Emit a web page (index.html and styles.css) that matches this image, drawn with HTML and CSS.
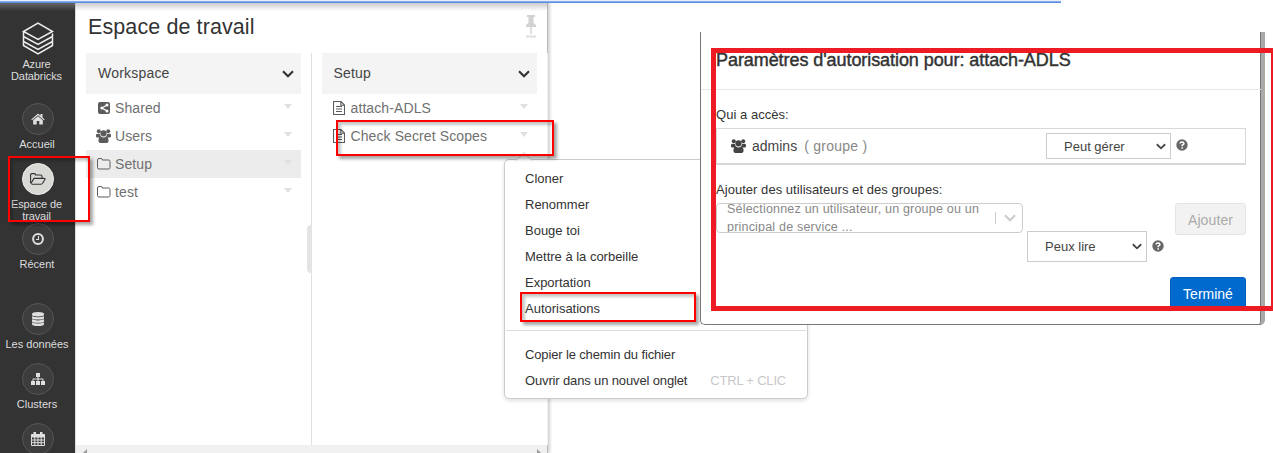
FILE: index.html
```html
<!DOCTYPE html>
<html lang="fr">
<head>
<meta charset="utf-8">
<title>Espace de travail</title>
<link rel="stylesheet" href="styles.css">
</head>
<body>
<svg class="defs" width="0" height="0">
  <symbol id="users" viewBox="0 0 15 14"><g fill="currentColor"><circle cx="2.8" cy="2.3" r="2"/><circle cx="12.2" cy="2.3" r="2"/><circle cx="7.5" cy="4.3" r="3.1"/><path d="M0 7.6V6Q.3 4.6 2 4.8L4 5Q4 6.5 5 7.4L3.5 8.4H1Q0 8.4 0 7.6ZM15 7.6V6Q14.7 4.6 13 4.8L11 5Q11 6.5 10 7.4L11.5 8.4H14Q15 8.4 15 7.6ZM2.4 12Q2.4 7.8 5 7.5Q7.5 9.3 10 7.5Q12.6 7.8 12.6 12Q12.4 14 10.6 14H4.4Q2.6 14 2.4 12Z"/></g></symbol>
  <symbol id="folder" viewBox="0 0 14 12"><path d="M.5 9.5V2Q.5.5 2 .5H4.2Q5.3.5 5.3 2H11.5Q13 2 13 3.5V9.5Q13 11 11.5 11H2Q.5 11 .5 9.5Z" fill="none" stroke="currentColor"/></symbol>
  <symbol id="note" viewBox="0 0 12 14"><path d="M.5.5H8L11.5 4V13.5H.5ZM7.8.5V4.2H11.5M3 5.5H9M3 8H9M3 10.5H9" fill="none" stroke="currentColor" stroke-width="1.1"/></symbol>
  <symbol id="chevron" viewBox="0 0 12 8"><path d="M1 1.3L6 6.2L11 1.3" fill="none" stroke="currentColor" stroke-width="2.2"/></symbol>
  <symbol id="help" viewBox="0 0 12 12"><circle cx="6" cy="6" r="5.7" fill="currentColor"/><path d="M4 4.5Q4.2 3 6 3T8 4.6Q8 5.5 6.2 6.2V7.2M6.2 8.2V9.8" fill="none" stroke="#fff" stroke-width="1.5"/></symbol>
</svg>

<div class="app">
  <nav class="sidebar">
    <div class="brand">
      <svg width="32" height="33" viewBox="0 0 32 33" fill="none" stroke="#eee" stroke-width="1.5"><path d="M1.5 9.5L16 1L30.500 9.5L16 17.500ZM1.500 9.500V14.500L16 22.500L30.500 14.500V11.500M1.500 14.500V19.500L16 27.500L30.500 19.500V15.500M1.500 19.500V23.500L16 32L30.500 23.500V20"/></svg>
      <span>Azure<br>Databricks</span>
    </div>
    <div class="item"><i><svg width="14" height="12" viewBox="0 0 14 12" fill="#e0e0e0"><path d="M.3 6.400L7 .5L9.500 2.700V1H11.500V4.500L13.700 6.400L12.900 7.200L7 2.200L1.100 7.200ZM2.200 7.200L7 3.200L11.800 7.200V11.500H8.300V8H5.700V11.500H2.200Z"/></svg></i><span>Accueil</span></div>
    <div class="item active"><i><svg width="16" height="12" viewBox="0 0 16 12" fill="none" stroke="#333" stroke-width="1.100"><path d="M.6 10V2Q.6.6 2 .6H4.500Q5.500.6 5.500 2H10.500Q12 2 12 3.500V5M.8 10.700L4 5.400H14Q15.600 5.400 15 6.300L12.600 10.300Q12 11.200 11 11.200H1.500"/></svg></i><span>Espace de<br>travail</span></div>
    <div class="item"><i><svg width="12" height="12" viewBox="0 0 12 12" fill="none" stroke="#e0e0e0"><circle cx="6" cy="6" r="4.900" stroke-width="2"/><path d="M6.500 3V6.500H4" stroke-width="1.100"/></svg></i><span>Récent</span></div>
    <div class="item gap"><i><svg width="12" height="14" viewBox="0 0 12 14" fill="#e0e0e0"><path d="M0 2Q0 0 6 0T12 2V3Q12 4.400 6 4.400T0 3ZM0 4.200Q2 5.300 6 5.300T12 4.200V6Q12 7.500 6 7.500T0 6ZM0 7.300Q2 8.400 6 8.400T12 7.300V9.200Q12 10.700 6 10.700T0 9.200ZM0 10.500Q2 11.600 6 11.600T12 10.500V12Q12 14 6 14T0 12Z"/></svg></i><span>Les données</span></div>
    <div class="item"><i><svg width="14" height="12" viewBox="0 0 14 12" fill="#e0e0e0"><path d="M5 0H9V4H7.500V5.500H11.500Q12.500 5.500 12.500 6.500V8H14V12H10V8H11.500V6.500H7.500V8H9V12H5V8H6.500V6.500H2.500V8H4V12H0V8H1.500V6.500Q1.500 5.500 2.500 5.500H6.500V4H5Z"/></svg></i><span>Clusters</span></div>
    <div class="item"><i><svg width="14" height="14" viewBox="0 0 14 14"><path d="M.5 2.500H13.500V13.500H.5ZM.5 5H13.500M.5 8H13.500M.5 10.700H13.500M3.800 5V13.500M7 5V13.500M10.200 5V13.500" fill="none" stroke="#e0e0e0"/><path d="M.5 2H13.500V5H.5ZM2.500 0H5V3.500H2.500ZM9 0H11.500V3.500H9Z" fill="#e0e0e0"/></svg></i></div>
  </nav>

  <main class="panel">
    <header class="panel-head">
      <h1>Espace de travail</h1>
      <svg width="12" height="23" viewBox="0 0 12 23"><path d="M2 0H10V2H8.500V8L11 10V12H1V10L3.500 8V2H2Z" fill="#d2d2d2"/><path d="M6 12V19M1 21.500H11" stroke="#dedede" stroke-width="2"/></svg>
    </header>
    <div class="columns">
      <section class="col">
        <div class="col-head"><span>Workspace</span><svg width="12" height="8"><use href="#chevron"/></svg></div>
        <div class="row"><svg class="ico" width="14" height="13" viewBox="0 0 14 13"><rect x="1" width="12" height="12" rx="2" fill="currentColor"/><path d="M10 3L5 6L10 9" fill="none" stroke="#fff" stroke-width="1.200"/><circle cx="10" cy="3" r="1.500" fill="#fff"/><circle cx="4.800" cy="6" r="1.500" fill="#fff"/><circle cx="10" cy="9" r="1.500" fill="#fff"/></svg><span>Shared</span><b></b></div>
        <div class="row"><svg class="ico" width="15" height="14"><use href="#users"/></svg><span>Users</span><b></b></div>
        <div class="row selected"><svg class="ico" width="14" height="12"><use href="#folder"/></svg><span>Setup</span><b></b></div>
        <div class="row"><svg class="ico" width="14" height="12"><use href="#folder"/></svg><span>test</span><b></b></div>
      </section>
      <div class="divider"><div class="grip"></div></div>
      <section class="col">
        <div class="col-head"><span>Setup</span><svg width="12" height="8"><use href="#chevron"/></svg></div>
        <div class="row note"><svg class="ico" width="12" height="14"><use href="#note"/></svg><span>attach-ADLS</span><b></b></div>
        <div class="row note"><svg class="ico" width="12" height="14"><use href="#note"/></svg><span>Check Secret Scopes</span><b></b></div>
      </section>
      <div class="divider end"></div>
    </div>
    <footer class="scroll"><svg width="4" height="4"><path d="M4 0V4H0Z" fill="#999"/></svg><svg width="4" height="4"><path d="M0 0V4H4Z" fill="#999"/></svg></footer>
  </main>
</div>
<div class="topbar"></div>
<div class="topshade"></div>

<div class="menu">
  <svg class="tip" width="18" height="10" viewBox="0 0 18 10"><path d="M1 9.500L9 1.500L17 9.500" fill="#fff" stroke="#ccc"/></svg>
  <div>Cloner</div><div>Renommer</div><div>Bouge toi</div><div>Mettre à la corbeille</div><div>Exportation</div><div>Autorisations</div>
  <hr>
  <div>Copier le chemin du fichier</div>
  <div class="shortcut"><span>Ouvrir dans un nouvel onglet</span><kbd>CTRL + CLIC</kbd></div>
</div>
<div class="mark mark-nav"></div>
<div class="mark mark-file"></div>
<div class="mark mark-perm"></div>

<div class="dialog">
  <h2><span>Paramètres d'autorisation pour: attach-ADLS</span></h2>
  <div class="body">
    <label>Qui a accès:</label>
    <div class="access">
      <svg class="ico" width="15" height="14"><use href="#users"/></svg>
      <span class="who">admins</span><span class="kind">( groupe )</span>
      <div class="select manage"><span>Peut gérer</span><svg width="10" height="7" viewBox="0 0 12 8"><use href="#chevron"/></svg></div>
      <svg class="help" width="12" height="12"><use href="#help"/></svg>
    </div>
    <label class="add-label">Ajouter des utilisateurs et des groupes:</label>
    <div class="add">
      <div class="combo"><p>Sélectionnez un utilisateur, un groupe ou un principal de service ...</p><em></em><svg width="12" height="8"><use href="#chevron"/></svg></div>
      <div class="select read"><span>Peux lire</span><svg width="10" height="7" viewBox="0 0 12 8"><use href="#chevron"/></svg></div>
      <svg class="help" width="12" height="12"><use href="#help"/></svg>
      <div class="button">Ajouter</div>
    </div>
    <div class="actions"><div class="button primary">Terminé</div></div>
  </div>
</div>
<div class="frame"></div>
</body>
</html>
```
FILE: styles.css
```css
* { box-sizing: border-box; }
body { margin: 0; width: 1273px; height: 453px; overflow: hidden; position: relative; background: #fff; font: 13px/16px "Liberation Sans", Arial, sans-serif; color: #333; }
svg { display: block; flex: none; }
.defs { position: absolute; }
h1, h2, p { margin: 0; font-weight: 400; }

.app { display: flex; height: 453px; }
.topbar { position: absolute; top: 0; left: 0; width: 1061px; height: 3px; background: #e8eefa; border-bottom: 1px solid #608de0; box-shadow: inset 0 -1px #86aaeb; }
.topshade { position: absolute; top: 3px; left: 0; width: 548px; height: 8px; background: linear-gradient(rgba(150,150,150,.5), rgba(150,150,150,0)); }

.sidebar { width: 75px; height: 453px; overflow: hidden; background: #333; color: #ddd; font-size: 11px; line-height: 12px; text-align: center; padding-top: 22px; flex: none; }
.brand { height: 81px; display: flex; flex-direction: column; align-items: center; gap: 3px; padding-left: 1px; letter-spacing: -.1px; }
.brand span { margin-left: -3px; }
.item { height: 60px; display: flex; flex-direction: column; align-items: center; gap: 3px; padding-left: 1px; white-space: nowrap; position: relative; }
.item i { width: 32px; height: 32px; flex: none; border: 1px solid #555; border-radius: 50%; background: #3d3d3d; display: flex; align-items: center; justify-content: center; }
.item span { margin-left: -2px; }
.item.active i { background: #d8d8d5; border-color: #eee; }
.item.active span { margin-left: -13px; margin-right: -10px; letter-spacing: -.1px; }
.item.gap { margin-top: 20px; }

.panel { width: 473px; height: 453px; flex: none; display: flex; flex-direction: column; border-left: 1px solid #ddd; border-right: 1px solid #bbb; box-shadow: 2px 0 3px rgba(0,0,0,.18); }
.panel-head { height: 53px; padding: 15px 10px 0 12px; display: flex; justify-content: space-between; }
h1 { font-size: 21.500px; line-height: 25px; letter-spacing: .1px; }
.columns { display: flex; flex: 1; padding-left: 10px; }
.col { width: 215px; flex: none; font-size: 14px; color: #707070; }
.col-head { height: 41px; background: #f4f4f4; color: #444; display: flex; align-items: center; justify-content: space-between; padding: 0 7px 2px 12px; letter-spacing: .2px; }
.col-head svg { color: #333; margin-top: 3px; }
.row { height: 28px; display: flex; align-items: center; padding: 0 9px 0 11px; letter-spacing: .1px; }
.row .ico { margin-right: 4px; color: #5b5b5b; }
.row .ico[width="15"] { margin-left: -1px; }
.row.note .ico { margin-right: 6px; }
.row b { margin: -3px 0 0 auto; border: 4px solid transparent; border-top: 5px solid #e0e0e0; border-bottom: 0; }
.selected { background: #ececec; }
.divider { width: 1px; margin: 0 10px; background: #e0e0e0; position: relative; }
.divider.end { margin-right: 0; background: #eee; }
.grip { position: absolute; top: 172px; left: -4px; width: 5px; height: 48px; border-radius: 4px 0 0 4px; background: #e4e4e4; }
.scroll { height: 8px; background: #f0f0f0; display: flex; justify-content: space-between; align-items: flex-end; padding: 0 6px 0 7px; }

.mark { position: absolute; border: 2px solid #f00; box-shadow: 3px 3px 3px rgba(0,0,0,.35), inset 3px 3px 3px rgba(0,0,0,.22); }
.mark-nav { left: 8px; top: 156px; width: 82px; height: 66px; }
.mark-file { left: 336px; top: 120px; width: 218px; height: 36px; }
.mark-perm { left: 520px; top: 292px; width: 176px; height: 30px; }

.menu { position: absolute; left: 504px; top: 159px; width: 304px; height: 240px; background: #fff; border: 1px solid #ccc; border-radius: 5px; box-shadow: 0 2px 4px rgba(0,0,0,.12); padding: 6px 1px; letter-spacing: -.01px; }
.menu > div { height: 26px; line-height: 25px; padding: 0 20px 0 19px; white-space: nowrap; }
.menu hr { height: 1px; border: 0; margin: 8px 0 11px; background: #ddd; }
.menu hr ~ div { letter-spacing: -.14px; }
.tip { position: absolute; left: 10px; top: -9px; }
.shortcut { display: flex; justify-content: space-between; }
kbd { font: inherit; color: #c8c8c8; letter-spacing: -.2px; }

.dialog { position: absolute; left: 700px; top: 32px; width: 565px; height: 293px; background: #fff; border: solid #777; border-width: 0 1px 1px; border-radius: 0 0 5px 5px; border-right: 4px solid #aaa; box-shadow: inset -1px 0 #777; }
h2 { height: 58px; border-bottom: 1px solid #e8e8e8; padding: 17px 0 0 15px; font-size: 18px; line-height: 23px; letter-spacing: -.07px; -webkit-text-stroke: .45px #333; }
.body { padding: 16px 15px 0; }
.body label { display: block; height: 22px; line-height: 18px; letter-spacing: .04px; }
.access { height: 37px; border: 1px solid #d8d8d8; border-bottom-width: 2px; display: flex; align-items: center; padding-left: 14px; font-size: 14px; color: #444; }
.who { margin-left: 6px; letter-spacing: 0; }
.kind { margin-left: 7px; color: #888; letter-spacing: .25px; }
.select { border: 1px solid #ccc; display: flex; align-items: center; justify-content: space-between; padding: 0 4px 0 17px; font-size: 13px; letter-spacing: 0; color: #444; }
.manage { width: 125px; height: 26px; margin-left: auto; }
.manage span { margin-top: 2px; }
.help { margin-left: 5px; color: #666; }
.access .help { margin-right: 57px; margin-bottom: 3px; }
.body .add-label { margin-top: 16px; height: 22px; }
.add { display: flex; height: 74px; align-items: flex-start; }
.combo { width: 307px; height: 30px; border: 1px solid #ccc; border-radius: 4px; overflow: hidden; display: flex; align-items: center; color: #888; }
.combo p { width: 268px; height: 36px; line-height: 18px; margin-left: 10px; font-size: 12.500px; letter-spacing: .2px; white-space: normal; }
.combo em { width: 1px; height: 12px; background: #ccc; margin: 0 8px 0 0; }
.combo svg { color: #ccc; }
.read { width: 120px; height: 31px; margin: 28px 0 0 4px; }
.add .help { margin-top: 37px; }
.button { margin-left: auto; width: 71px; height: 32px; border: 1px solid #e4e4e4; border-radius: 3px; background: #f2f2f2; color: #aaa; font-size: 14px; line-height: 32px; text-align: center; letter-spacing: .1px; }
.actions { display: flex; }
.button.primary { width: 76px; background: #006ace; border-color: #0062be; color: #fff; letter-spacing: 0; }
.frame { position: absolute; left: 711px; top: 48px; width: 564px; height: 263px; border: 5px solid #ed1c24; border-right-width: 4px; }
```
